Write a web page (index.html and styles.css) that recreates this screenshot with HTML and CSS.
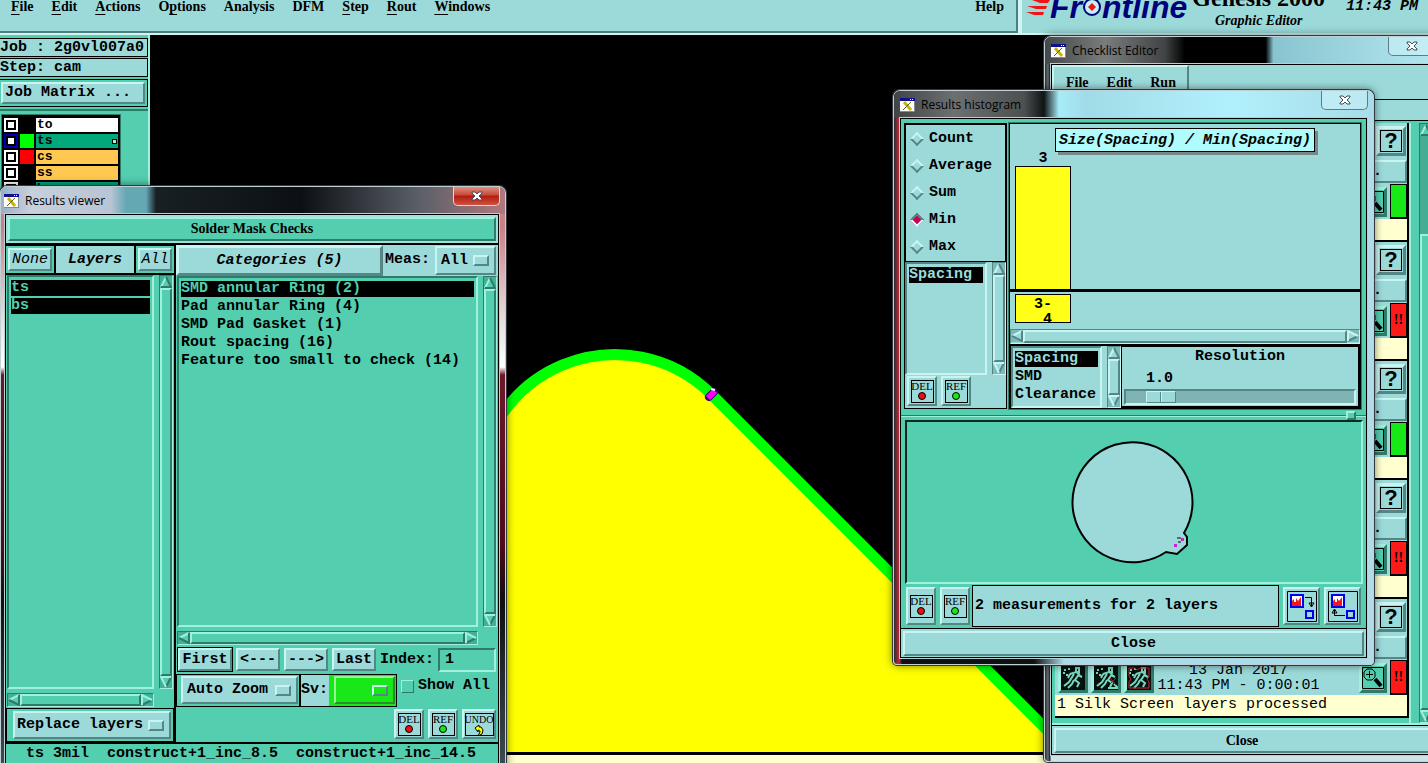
FILE: index.html
```html
<!DOCTYPE html>
<html lang="en">
<head>
    <meta charset="UTF-8">
    <meta name="viewport" content="width=device-width, initial-scale=1.0">
    <title>Graphic Editor</title>
    <link rel="stylesheet" href="styles.css">
</head>
<body>
<svg class="defs" aria-hidden="true">
    <symbol id="up" viewBox="0 0 12 12"><path d="M6 1 L11 11 H1 Z" fill="currentColor"/><path d="M6 1 L1 11" class="lt"/><path d="M6 1 L11 11 H1" class="dk"/></symbol>
    <symbol id="down" viewBox="0 0 12 12"><path d="M1 1 H11 L6 11 Z" fill="currentColor"/><path d="M11 1 L6 11" class="dk"/><path d="M11 1 H1 L6 11" class="lt"/></symbol>
    <symbol id="left" viewBox="0 0 12 12"><path d="M1 6 L11 1 V11 Z" fill="currentColor"/><path d="M1 6 L11 1" class="lt"/><path d="M11 1 V11 L1 6" class="dk"/></symbol>
    <symbol id="right" viewBox="0 0 12 12"><path d="M1 1 L11 6 L1 11 Z" fill="currentColor"/><path d="M11 6 L1 11" class="dk"/><path d="M1 11 V1 L11 6" class="lt"/></symbol>
    <symbol id="xwin" viewBox="0 0 15 14"><path d="M0 0H15V14H0Z" fill="#fff"/><path d="M0 0H15V3H0Z" fill="#10108c"/><path d="M10 1h1v1h-1zM12 1h1v1h-1z" fill="#fff"/><path d="M4 4l7 8" stroke="#c8b400" stroke-width="3"/><path d="M11 4l-8 8" stroke="#5c5c20" stroke-width="1"/><path d="M0 13.5H15M14.5 3V14" stroke="#888"/></symbol>
    <symbol id="cross" viewBox="0 0 12 10"><path d="M1 1h3l2 2 2-2h3v1L8 5l3 3v1H8L6 7 4 9H1V8l3-3-3-3z" fill="#fff" stroke="#444c58"/></symbol>
    <symbol id="zoomer" viewBox="0 0 22 22"><path d="M.5 .5H21.5V21.5H.5Z" class="box"/><path d="M5 2h5l3 3v5l-3 3H5L2 10V5z" class="box"/><path d="M13 12l6 7" stroke="#000" stroke-width="4"/></symbol>
    <symbol id="runner" viewBox="0 0 24 24"><path d="M0 0H24V24H0Z" fill="#06100e"/><path d="M15 2h3v4h-3zM9 8l6-2 3 2-4 6 4 3-2 4M13 8l-5 8-5 4M17 9l4 2M9 8l-2 4M13 14l-2 4-4 4M3 4h2M7 3h2M2 7h2M5 9h2" fill="none" stroke="#78d8be" stroke-width="2"/></symbol>
    <symbol id="hist" viewBox="0 0 14 14"><path d="M1 1H13V13H1Z" fill="#fff" stroke="#00e" stroke-width="2"/><path d="M2 12V7l2-2v3h2V4l2 3 3-4v9z" fill="#f01818"/></symbol>
</svg>

<div class="desktop">
    <svg class="board" aria-hidden="true">
        <path d="M478 753 V491 A136.5 136.5 0 0 1 711.5 394.5 L1070 753 Z" fill="#ff0"/>
        <path d="M478.5 491 A136.5 136.5 0 0 1 711.5 394.5 L1090 773" fill="none" stroke="#0f0" stroke-width="11"/>
        <path d="M709 397 L714 392" stroke="#2a0060" stroke-width="8" stroke-linecap="round"/>
        <path d="M708 398 L715 391" stroke="#f0f" stroke-width="6"/>
        <path d="M711 389l4 1" stroke="#fff" stroke-width="2"/>
        <rect y="752" width="100%" height="3" fill="#000"/>
        <rect y="755" width="100%" height="20" fill="#ffffcf"/>
    </svg>

    <header class="topbar">
        <nav class="menubar">
            <a href="#"><u>F</u>ile</a>
            <a href="#"><u>E</u>dit</a>
            <a href="#"><u>A</u>ctions</a>
            <a href="#">O<u>p</u>tions</a>
            <a href="#">Analysis</a>
            <a href="#">DFM</a>
            <a href="#"><u>S</u>tep</a>
            <a href="#"><u>R</u>out</a>
            <a href="#"><u>W</u>indows</a>
            <a href="#" class="help">Help</a>
        </nav>
        <div class="brand">
            <div class="logo">
                <svg width="24" height="20"><path d="M6 3H24l-2 3H14zM1 9H21l-1 3H10zM0 15H18l-1 3H8z" fill="#f01414"/></svg>
                <span>Fr</span>
                <svg width="20" height="20"><circle cx="10" cy="10" r="8" fill="#c4f2f2" stroke="#00007c" stroke-width="2"/><path d="M10 6l4 4-4 4-4-4z" fill="#f01414"/></svg>
                <span>ntline</span>
            </div>
            <div class="product">
                <strong>Genesis 2000</strong>
                <em>Graphic Editor</em>
            </div>
            <time class="clock">11:43 PM</time>
        </div>
    </header>

    <aside class="side">
        <div class="info">Job : 2g0vl007a0</div>
        <div class="info">Step: cam</div>
        <div class="matrix"><button class="btn">Job Matrix ...</button></div>
        <div class="layer-wrap">
            <div class="layers">
                <label><input type="checkbox"><i></i><span>to</span></label>
                <label class="ts"><input type="checkbox" checked><i></i><span>ts<b></b></span></label>
                <label class="cs"><input type="checkbox"><i></i><span>cs</span></label>
                <label class="ss"><input type="checkbox"><i></i><span>ss</span></label>
                <label class="bs"><input type="checkbox"><i></i><span>bs</span></label>
            </div>
        </div>
    </aside>

    <section class="window checklist">
        <div class="titlebar">
            <svg width="15" height="14"><use href="#xwin"/></svg>
            <h2>Checklist Editor</h2>
            <button class="x" aria-label="Close window"><svg width="12" height="10"><use href="#cross"/></svg></button>
        </div>
        <div class="pane">
            <nav class="cl-menu">
                <a href="#">File</a>
                <a href="#">Edit</a>
                <a href="#">Run</a>
            </nav>
            <div class="cl-title"></div>
            <div class="cl-body">
                <div class="cl-list">
                    <div class="check">
                        <button class="btn help-btn"><b>?</b></button>
                        <button class="btn name-btn">.</button>
                        <div class="run"><button class="btn teal" aria-label="View"><svg width="22" height="22"><use href="#zoomer"/></svg></button><span class="state ok"></span></div>
                        <div class="note"></div>
                    </div>
                    <div class="check">
                        <button class="btn help-btn"><b>?</b></button>
                        <button class="btn name-btn">.</button>
                        <div class="run"><button class="btn teal" aria-label="View"><svg width="22" height="22"><use href="#zoomer"/></svg></button><span class="state bad">!!</span></div>
                        <div class="note"></div>
                    </div>
                    <div class="check">
                        <button class="btn help-btn"><b>?</b></button>
                        <button class="btn name-btn">.</button>
                        <div class="run"><button class="btn teal" aria-label="View"><svg width="22" height="22"><use href="#zoomer"/></svg></button><span class="state ok"></span></div>
                        <div class="note"></div>
                    </div>
                    <div class="check">
                        <button class="btn help-btn"><b>?</b></button>
                        <button class="btn name-btn">.</button>
                        <div class="run"><button class="btn teal" aria-label="View"><svg width="22" height="22"><use href="#zoomer"/></svg></button><span class="state bad">!!</span></div>
                        <div class="note"></div>
                    </div>
                    <div class="check">
                        <button class="btn help-btn"><b>?</b></button>
                        <button class="btn name-btn">.</button>
                        <div class="run">
                            <button class="btn teal" aria-label="Run"><svg width="24" height="24"><use href="#runner"/></svg></button>
                            <button class="btn teal" aria-label="Run on feature"><svg width="24" height="24"><use href="#runner"/><path d="M14 22H24L20 18" fill="none" stroke="#78d8be" stroke-width="2"/><path d="M16 12l6 7M22 12l-6 6" stroke="#b01c2c"/></svg></button>
                            <button class="btn teal" aria-label="Run in profile"><svg width="24" height="24"><use href="#runner"/><path d="M2 2h6l2 2 3-2h9v9l-2 2 2 3v6H2v-6l2-3-2-3z" fill="none" stroke="#d8202c"/></svg></button>
                            <p>13 Jan 2017<br>11:43 PM - 0:00:01</p>
                            <button class="btn teal" aria-label="View"><svg width="22" height="22"><use href="#zoomer"/><path d="M4 7.500h7M7.500 4v7" stroke="#000"/></svg></button>
                            <span class="state bad">!!</span>
                        </div>
                        <div class="note">1 Silk Screen layers processed</div>
                    </div>
                </div>
                <div class="vscroll">
                    <button aria-label="Up"><svg width="12" height="12"><use href="#up"/></svg></button>
                    <div class="track"><div class="thumb"></div></div>
                    <button aria-label="Down"><svg width="12" height="12"><use href="#down"/></svg></button>
                </div>
            </div>
            <div class="close-row"><button class="btn serif">Close</button></div>
        </div>
    </section>

    <section class="window viewer">
        <div class="titlebar">
            <svg width="15" height="14"><use href="#xwin"/></svg>
            <h2>Results viewer</h2>
            <button class="x red" aria-label="Close window"><svg width="12" height="10"><use href="#cross"/></svg></button>
        </div>
        <div class="pane">
            <div class="rv-head"><button class="btn serif green">Solder Mask Checks</button></div>
            <div class="rv-cols">
                <div class="rv-layers">
                    <div class="tabs">
                        <div><button class="btn">None</button></div>
                        <strong>Layers</strong>
                        <div><button class="btn">All</button></div>
                    </div>
                    <div class="scroller">
                        <ul class="list">
                            <li class="on">ts</li>
                            <li class="on">bs</li>
                        </ul>
                        <div class="vscroll">
                            <button aria-label="Up"><svg width="12" height="12"><use href="#up"/></svg></button>
                            <div class="track"><div class="thumb"></div></div>
                            <button aria-label="Down"><svg width="12" height="12"><use href="#down"/></svg></button>
                        </div>
                        <div class="hscroll">
                            <button aria-label="Left"><svg width="12" height="12"><use href="#left"/></svg></button>
                            <div class="track"><div class="thumb"></div></div>
                            <button aria-label="Right"><svg width="12" height="12"><use href="#right"/></svg></button>
                        </div>
                    </div>
                    <div class="replace">
                        <div class="drop"><select aria-label="Layer mode"><option>Replace layers</option></select></div>
                    </div>
                </div>
                <div class="rv-cats">
                    <div class="cat-head">
                        <button class="btn">Categories (5)</button>
                        <label for="meas">Meas:</label>
                        <div class="drop"><select id="meas"><option>All</option></select></div>
                    </div>
                    <div class="scroller">
                        <ul class="list">
                            <li class="on">SMD annular Ring (2)</li>
                            <li>Pad annular Ring (4)</li>
                            <li>SMD Pad Gasket (1)</li>
                            <li>Rout spacing (16)</li>
                            <li>Feature too small to check (14)</li>
                        </ul>
                        <div class="vscroll">
                            <button aria-label="Up"><svg width="12" height="12"><use href="#up"/></svg></button>
                            <div class="track"><div class="thumb"></div></div>
                            <button aria-label="Down"><svg width="12" height="12"><use href="#down"/></svg></button>
                        </div>
                        <div class="hscroll">
                            <button aria-label="Left"><svg width="12" height="12"><use href="#left"/></svg></button>
                            <div class="track"><div class="thumb"></div></div>
                            <button aria-label="Right"><svg width="12" height="12"><use href="#right"/></svg></button>
                        </div>
                    </div>
                    <div class="nav-row">
                        <button class="btn first">First</button>
                        <button class="btn">&lt;---</button>
                        <button class="btn">---&gt;</button>
                        <button class="btn">Last</button>
                        <label for="index">Index:</label>
                        <input id="index" type="text" value="1">
                    </div>
                    <div class="opt-row">
                        <div class="framed"><div class="drop"><select aria-label="Zoom"><option>Auto Zoom</option></select></div></div>
                        <div class="framed sv"><label for="sv">Sv:</label><span><div class="drop"><select id="sv"><option></option></select></div></span></div>
                        <label class="show-all"><input type="checkbox">Show All</label>
                    </div>
                    <div class="tool-row">
                        <button class="btn tool"><span>DEL<i></i></span></button>
                        <button class="btn tool ref"><span>REF<i></i></span></button>
                        <button class="btn tool undo"><span>UNDO<svg width="10" height="11"><path d="M1 3l4-3v2h2l2 3-1 4-4 2 2-4V6L4 5v2z" fill="#ff0" stroke="#000"/></svg></span></button>
                    </div>
                </div>
            </div>
            <div class="status"><span>ts 3mil</span><span>construct+1_inc_8.5</span><span>construct+1_inc_14.5</span></div>
        </div>
    </section>

    <section class="window histogram">
        <div class="titlebar">
            <svg width="15" height="14"><use href="#xwin"/></svg>
            <h2>Results histogram</h2>
            <button class="x" aria-label="Close window"><svg width="12" height="10"><use href="#cross"/></svg></button>
        </div>
        <div class="pane">
            <div class="h-top">
                <div class="h-left">
                    <div class="radios">
                        <label><input type="radio" name="fn">Count</label>
                        <label><input type="radio" name="fn">Average</label>
                        <label><input type="radio" name="fn">Sum</label>
                        <label><input type="radio" name="fn" checked>Min</label>
                        <label><input type="radio" name="fn">Max</label>
                    </div>
                    <div class="scroller cyan">
                        <ul class="list">
                            <li class="on">Spacing</li>
                        </ul>
                        <div class="vscroll">
                            <button aria-label="Up"><svg width="12" height="12"><use href="#up"/></svg></button>
                            <div class="track"><div class="thumb"></div></div>
                            <button aria-label="Down"><svg width="12" height="12"><use href="#down"/></svg></button>
                        </div>
                    </div>
                    <div class="h-tools">
                        <button class="btn tool"><span>DEL<i></i></span></button>
                        <button class="btn tool ref"><span>REF<i></i></span></button>
                    </div>
                </div>
                <div class="h-right">
                    <div class="chart">
                        <h3>Size(Spacing) / Min(Spacing)</h3>
                        <div class="col"><span>3</span><div class="bar"></div></div>
                    </div>
                    <div class="axis"><div class="tick">3-<br>&nbsp;4</div></div>
                    <div class="hscroll cyan">
                        <button aria-label="Left"><svg width="12" height="12"><use href="#left"/></svg></button>
                        <div class="track"><div class="thumb"></div></div>
                        <button aria-label="Right"><svg width="12" height="12"><use href="#right"/></svg></button>
                    </div>
                    <div class="h-res">
                        <div class="scroller cyan">
                            <ul class="list">
                                <li class="on">Spacing</li>
                                <li>SMD</li>
                                <li>Clearance</li>
                            </ul>
                            <div class="vscroll">
                                <button aria-label="Up"><svg width="12" height="12"><use href="#up"/></svg></button>
                                <div class="track"><div class="thumb"></div></div>
                                <button aria-label="Down"><svg width="12" height="12"><use href="#down"/></svg></button>
                            </div>
                        </div>
                        <div class="resolution">
                            <label for="res">Resolution</label>
                            <output for="res">1.0</output>
                            <input id="res" type="range" min="0" max="10" value="1" step="0.1">
                        </div>
                    </div>
                </div>
            </div>
            <div class="sash"><i></i></div>
            <div class="shape">
                <svg width="130" height="130" viewBox="1068 438 130 130">
                    <path d="M1183 534 A60 60 0 1 0 1165 553 L1176 555 L1186 546 V538 Z" fill="#9cdada" stroke="#000" stroke-width="2"/>
                    <path d="M1176 539h4M1177 543h3" stroke="#000"/>
                    <path d="M1180 539h3v3h-3zM1173 545h3v3h-3z" fill="#c820d8"/>
                </svg>
            </div>
            <div class="h-bottom">
                <button class="btn tool"><span>DEL<i></i></span></button>
                <button class="btn tool ref"><span>REF<i></i></span></button>
                <p>2 measurements for 2 layers</p>
                <button class="btn swap" aria-label="Copy histogram down"><svg width="30" height="31"><path d="M.5 .5H29.500V30.500H.5Z" class="box"/><use href="#hist" x="3" y="3" width="14" height="14"/><path d="M19 20h7v7h-7z" fill="none" stroke="#00e" stroke-width="2"/><path d="M18 6.500h6.500V15M22 12l2.500 4 2.500-4z" fill="none" stroke="#000"/></svg></button>
                <button class="btn swap" aria-label="Copy histogram up"><svg width="30" height="31"><path d="M.5 .5H29.500V30.500H.5Z" class="box"/><use href="#hist" x="3" y="3" width="14" height="14"/><path d="M19 20h7v7h-7z" fill="none" stroke="#00e" stroke-width="2"/><path d="M17 24.500H6.500V19M4 22l2.500-4 2.500 4z" fill="none" stroke="#000"/></svg></button>
            </div>
            <div class="close-row"><button class="btn">Close</button></div>
        </div>
    </section>
</div>
</body>
</html>
```
FILE: styles.css
```css
* {
  box-sizing: border-box;
}

body {
  margin: 0;
  background-color: black;
  color: black;
  font: bold 15px/18px "Liberation Mono", monospace;
  --face: #9cdada;
  --lt: #c8f4f2;
  --dk: #558686;
}

button, input, select {
  font: inherit;
  color: inherit;
  margin: 0;
}

svg {
  display: block;
  flex: none;
}

.defs {
  position: absolute;
  width: 0;
  height: 0;
}

.lt { fill: none; stroke: var(--lt); stroke-width: 2; }
.dk { fill: none; stroke: var(--dk); stroke-width: 2; }
.box { fill: none; stroke: black; }

.desktop {
  position: relative;
  height: 100vh;
  overflow: hidden;
}

.board {
  position: absolute;
  left: 0;
  top: 0;
  width: 100%;
  height: 100%;
}

/* Shared controls */
.btn {
  background-color: var(--face);
  border: 2px solid;
  border-color: var(--lt) var(--dk) var(--dk) var(--lt);
  border-radius: 0;
  padding: 0;
  white-space: nowrap;
}

.serif {
  font: bold 14px/18px "Liberation Serif", serif;
}

.green, .teal, .scroller, .vscroll, .hscroll, .rv-cats, .rv-layers, .status, .side {
  --face: #53ceaf;
  --lt: #9ff0dc;
  --dk: #2f7a68;
}

.cyan, .cyan .vscroll {
  --face: #9cdada;
  --lt: #c8f4f2;
  --dk: #558686;
}

.drop {
  display: flex;
  align-items: center;
  background-color: #9cdada;
  border: 2px solid;
  border-color: #c8f4f2 #558686 #558686 #c8f4f2;
  padding-right: 5px;
}

.drop::after {
  content: "";
  width: 12px;
  height: 7px;
  border: 2px solid;
  border-color: #c8f4f2 #558686 #558686 #c8f4f2;
}

.drop select {
  appearance: none;
  border: 0;
  background: none;
  flex: 1;
  min-width: 0;
  padding: 0 4px;
}

.scroller {
  display: grid;
  grid-template-columns: 1fr 14px;
  grid-template-rows: 1fr;
  gap: 4px 5px;
  background-color: var(--face);
}

.list {
  margin: 0;
  padding: 2px;
  list-style: none;
  border: 2px solid;
  border-color: var(--dk) var(--lt) var(--lt) var(--dk);
  white-space: nowrap;
}

.list li {
  border: 1px solid var(--face);
  border-width: 1px 0;
  line-height: 16px;
}

.list .on {
  background-color: black;
  color: var(--face);
}

.vscroll, .hscroll {
  display: flex;
  background-color: var(--face);
  border: 1px solid;
  border-color: var(--dk) var(--lt) var(--lt) var(--dk);
  color: var(--face);
}

.vscroll {
  flex-direction: column;
}

.vscroll button, .hscroll button {
  width: 12px;
  height: 12px;
  flex: none;
  border: 0;
  padding: 0;
  background-color: rgba(0, 60, 60, 0.2);
}

.track {
  flex: 1;
  display: flex;
}

.thumb {
  flex: 1;
  border: 2px solid;
  border-color: var(--lt) var(--dk) var(--dk) var(--lt);
}

.tool {
  width: 30px;
  height: 30px;
  display: flex;
  align-items: center;
  justify-content: center;
}

.tool span {
  display: flex;
  flex-direction: column;
  align-items: center;
  width: 23px;
  height: 23px;
  border: 1px solid black;
  font: 11px/11px "Liberation Serif", serif;
}

.tool i {
  width: 8px;
  height: 8px;
  border: 1px solid black;
  border-radius: 50%;
  background-color: #e81010;
}

.ref i {
  background-color: #18e818;
}

.undo {
  width: 34px;
}

.undo span {
  width: 29px;
  font-size: 10px;
}

/* Top bar */
.topbar {
  position: relative;
  display: flex;
  gap: 4px;
  height: 55px;
  margin-top: -20px;
  background-color: #d4f4f4;
  padding-bottom: 2px;
}

.menubar {
  flex: 1;
  display: flex;
  gap: 18px;
  padding: 18px 12px 0 11px;
  background-color: #9cdada;
  border: 2px solid #4c8080;
  border-width: 0 2px 2px 0;
  font: bold 14px/18px "Liberation Serif", serif;
}

.menubar a, .cl-menu a {
  color: black;
  text-decoration: none;
}

.menubar u {
  text-decoration-thickness: 1px;
  text-underline-offset: 3px;
}

.menubar .help {
  margin-left: auto;
}

.brand {
  flex: 0 0 406px;
  display: flex;
  gap: 5px;
  padding: 0 10px 0 4px;
  background-color: #9cdada;
}

.logo {
  display: flex;
  align-items: center;
  height: 53px;
  color: #00007c;
  font: italic bold 32px/34px "Liberation Sans", sans-serif;
}

.product {
  display: flex;
  flex-direction: column;
  align-items: center;
  padding-top: 4px;
  font-family: "Liberation Serif", serif;
}

.product strong {
  font-size: 24px;
  line-height: 28px;
}

.product em {
  font-size: 14px;
}

.clock {
  margin-left: auto;
  font-style: italic;
  padding-top: 18px;
}

/* Left panel */
.side {
  position: relative;
  width: 150px;
  height: 160px;
  padding: 3px 0 0;
  background-color: #53ceaf;
  border-right: 2px solid #9ff0dc;
}

.info {
  height: 19px;
  line-height: 17px;
  white-space: nowrap;
  background-color: #9cdada;
  border: 1px solid black;
  border-left: 0;
  margin-bottom: 1px;
}

.matrix {
  margin-top: 2px;
  padding: 2px 2px 2px 1px;
  border: 1px solid black;
  border-left: 0;
}

.matrix .btn {
  --face: #9cdada;
  --lt: #c8f4f2;
  --dk: #558686;
  display: block;
  width: 100%;
  text-align: left;
  padding-left: 2px;
}

.layer-wrap {
  margin-top: 2px;
  padding: 3px 0 0 1px;
  border-top: 2px solid #2f7a68;
}

.layers {
  width: 120px;
  background-color: black;
  border: 1px solid #2f7a68;
  padding: 3px 2px 0 2px;
}

.layers label {
  display: flex;
  gap: 2px;
  height: 16px;
}

.layers input {
  appearance: none;
  width: 14px;
  height: 14px;
  border: 2px solid white;
  background: white;
  box-shadow: inset 0 0 0 2px black;
}

.layers .ts input {
  border-color: #0000b0;
}

.layers i {
  width: 14px;
  height: 14px;
}

.layers span {
  flex: 1;
  display: flex;
  justify-content: space-between;
  align-items: center;
  height: 14px;
  padding: 0 1px;
  background-color: white;
  line-height: 14px;
  font-size: 13px;
}

.layers span b {
  width: 5px;
  height: 5px;
  border: 1px solid black;
  background-color: #9ff0dc;
}

.layers .ts i { background-color: #0f0; }
.layers .cs i { background-color: red; }
.layers .ts span, .layers .bs span { background-color: #00a87c; }
.layers .cs span, .layers .ss span { background-color: #ffc850; }

/* Windows */
.window {
  position: absolute;
  display: flex;
  flex-direction: column;
  border: 1px solid #c0d0d4;
  border-radius: 7px 7px 4px 4px;
  padding: 0 6px 6px;
  box-shadow: 0 0 0 1px #303840, 0 0 10px rgba(0, 0, 0, 0.6);
}

.titlebar {
  display: flex;
  align-items: center;
  gap: 6px;
  height: 27px;
  flex: none;
  font-family: "Open Sans", sans-serif;
}

.titlebar h2 {
  flex: 1;
  margin: 0;
  font-size: 12px;
  font-weight: normal;
}

.x {
  align-self: flex-start;
  display: flex;
  align-items: center;
  justify-content: center;
  width: 47px;
  height: 19px;
  padding: 0;
  border: 1px solid #5c7c88;
  border-top: 0;
  border-radius: 0 0 5px 5px;
  background-color: rgba(220, 250, 255, 0.4);
}

.red {
  border-color: #f0d0d0;
  background: linear-gradient(#e09080, #c84838 45%, #b01c10 50%, #d05040);
}

.pane {
  flex: 1;
  display: flex;
  flex-direction: column;
  min-height: 0;
  border: 1px solid black;
  outline: 1px solid #b8d0d0;
  background-color: #53ceaf;
}

.close-row {
  padding: 2px 2px 1px;
  background-color: #9cdada;
  border-top: 1px solid black;
}

.close-row .btn {
  display: block;
  width: 100%;
  height: 25px;
}

/* Checklist editor */
.checklist {
  left: 1044px;
  top: 36px;
  width: 396px;
  height: 726px;
  background: linear-gradient(90deg, #2c3034, #686c70 3px, #181c20 5px, transparent 6px), linear-gradient(#70868a 0, #8ec4d0 60px, #9cd0da 620px, #9cd0da 660px, #d0e4e8);
}

.checklist .titlebar {
  margin: 0 -6px;
  padding: 0 4px 0 6px;
  border-radius: 6px 6px 0 0;
  background: linear-gradient(90deg, #44484a, #787c7c 60px, #404444 120px, #000 140px, #000 56%, #88c4d0 58%, #b4e8f0);
}

.cl-menu {
  display: flex;
  gap: 18px;
  width: 137px;
  height: 34px;
  padding: 6px 12px;
  background-color: #9cdada;
  border: 2px solid;
  border-color: #c8f4f2 #558686 #558686 #c8f4f2;
  font: bold 14px/20px "Liberation Serif", serif;
}

.checklist .pane {
  background-color: #9cdada;
}

.cl-title {
  height: 22px;
  border: 1px solid black;
  border-width: 1px 0;
}

.cl-body {
  flex: 1;
  display: flex;
  gap: 8px;
  background-color: #53ceaf;
  padding: 2px 0 0 3px;
  min-height: 0;
  border-bottom: 2px solid #9ff0dc;
}

.cl-list {
  width: 356px;
  border-right: 2px solid #9ff0dc;
}

.check {
  width: 354px;
  height: 119px;
  display: flex;
  flex-direction: column;
  align-items: flex-end;
  background-color: #9cdada;
  border-right: 2px solid black;
  border-bottom: 2px solid black;
}

.check .btn {
  border-width: 3px;
}

.help-btn {
  width: 30px;
  height: 30px;
  margin: 3px 1px 4px 0;
  display: flex;
  align-items: center;
  justify-content: center;
}

.help-btn b {
  width: 22px;
  height: 22px;
  border: 1px solid black;
  font: bold 22px/20px "Liberation Sans", sans-serif;
}

.check .name-btn {
  width: 100%;
  height: 23px;
  border-width: 2px;
  margin-bottom: 1px;
  text-align: right;
  padding-right: 23px;
  line-height: 14px;
}

.run {
  width: 100%;
  height: 35px;
  display: flex;
  align-items: center;
  justify-content: flex-end;
  gap: 3px;
  padding-left: 3px;
}

.run .btn {
  height: 30px;
  background-color: #53ceaf;
}

.run p {
  flex: 1;
  margin: 0;
  padding-right: 36px;
  text-align: center;
  font-weight: normal;
  line-height: 15px;
}

.state {
  width: 17px;
  height: 35px;
  border: 1px solid black;
  border-bottom-width: 2px;
  text-align: center;
  font: bold 14px/32px "Liberation Serif", serif;
}

.ok { background-color: #18e818; }
.bad { background-color: #ff1a1a; }

.note {
  width: 100%;
  height: 21px;
  padding-left: 2px;
  background-color: #ffffcf;
  font-weight: normal;
  line-height: 20px;
}

.cl-body .track {
  background-color: #44ae94;
  padding-top: 98px;
}

.cl-body .thumb {
  background-color: #53ceaf;
}

/* Results viewer */
.viewer {
  left: 0;
  top: 186px;
  bottom: -17px;
  width: 506px;
  padding: 0 6px 6px 4px;
  background: linear-gradient(#d08890 0, #c88088 40px, #e4dcdc 130px, #fff 180px, #6c1828 188px, #500c18 60%, #101010 70%, #405058);
}

.viewer .titlebar {
  margin: 0 -6px 0 -4px;
  padding: 0 5px 0 3px;
  border-radius: 6px 6px 0 0;
  background: linear-gradient(90deg, #98b0c8, #c8d0dc 30px, #b8c4d4 110px, #64a8b4 125px, #64a8b4 145px, #182024 155px, #0c1014 300px, #5c6068 420px, #b07880);
}

.viewer .pane {
  background-color: black;
  gap: 2px;
}

.rv-head {
  padding: 2px;
  background-color: #9fe0dc;
}

.rv-head .btn {
  display: block;
  width: 100%;
  height: 24px;
}

.rv-cols {
  flex: 1;
  display: grid;
  grid-template-columns: 168px 1fr;
  gap: 2px;
  min-height: 0;
}

.rv-layers, .rv-cats {
  display: flex;
  flex-direction: column;
  background-color: #53ceaf;
  min-height: 0;
  min-width: 0;
}

.tabs .btn, .cat-head .btn, .nav-row .btn, .tool-row .btn {
  --face: #9cdada;
  --lt: #c8f4f2;
  --dk: #558686;
}

.tabs {
  display: grid;
  grid-template-columns: 48px 1fr 38px;
  gap: 2px;
  height: 30px;
  background-color: black;
  padding: 1px 0 2px;
  font-style: italic;
}

.tabs div {
  padding: 2px;
  background-color: #53ceaf;
}

.tabs .btn {
  width: 100%;
  height: 23px;
  font-weight: normal;
}

.tabs strong {
  text-align: center;
  line-height: 27px;
  background-color: #9cdada;
}

.rv-layers .scroller, .rv-cats .scroller {
  flex: 1;
  grid-template-rows: 1fr 14px;
  padding: 0 1px;
}

.replace {
  padding: 2px 2px 2px 6px;
  margin-top: 1px;
  border: 1px solid black;
}

.replace .drop, .opt-row .drop {
  height: 28px;
}

.replace select {
  padding: 0 2px;
}

.cat-head {
  display: flex;
  background-color: #9cdada;
  height: 31px;
}

.cat-head .btn {
  flex: 1;
  border-width: 3px;
  font-style: italic;
}

.cat-head label {
  line-height: 30px;
  margin: 0 3px 0 2px;
}

.cat-head .drop {
  width: 61px;
  margin: 1px 2px;
}

.nav-row {
  display: flex;
  align-items: center;
  gap: 4px;
  padding: 2px;
  height: 29px;
}

.nav-row .btn {
  width: 44px;
  height: 23px;
}

.nav-row .first {
  width: 54px;
  outline: 1px solid black;
}

.nav-row input {
  flex: 1;
  min-width: 0;
  height: 24px;
  padding: 0 5px;
  border: 2px solid;
  border-color: #2f7a68 #9ff0dc #9ff0dc #2f7a68;
  border-radius: 0;
  background: none;
}

.opt-row {
  display: flex;
  height: 33px;
}

.framed {
  border: 1px solid black;
  padding: 1px 1px 1px 4px;
}

.framed .drop {
  width: 117px;
}

.sv {
  display: flex;
  padding: 0;
  background-color: #9cdada;
  line-height: 30px;
}

.sv span {
  background-color: #18e818;
  padding: 1px 1px 1px 5px;
  margin-left: 1px;
}

.sv .drop {
  width: 61px;
  background-color: #18e818;
  border-color: #9cf09c #2c8c2c #2c8c2c #9cf09c;
}

.show-all {
  display: flex;
  align-items: center;
  gap: 4px;
  height: 24px;
  padding-left: 4px;
}

.show-all input {
  appearance: none;
  width: 13px;
  height: 13px;
  border: 1px solid;
  border-color: #9ff0dc #2f7a68 #2f7a68 #9ff0dc;
}

.tool-row {
  display: flex;
  justify-content: flex-end;
  gap: 4px;
  padding: 2px 2px 3px;
}

.status {
  display: flex;
  gap: 18px;
  height: 28px;
  padding-left: 20px;
  line-height: 20px;
  background-color: #53ceaf;
}

/* Results histogram */
.histogram {
  left: 893px;
  top: 90px;
  width: 481px;
  height: 575px;
  background: linear-gradient(90deg, #2c2c30, #c02c38 5px, #701820 7px, rgba(0, 0, 0, 0) 8px, rgba(0, 0, 0, 0) 470px, #b4dce8 474px), linear-gradient(90deg, #101010 140px, #a8dcec 170px);
}

.histogram .titlebar {
  margin: 0 -6px;
  padding: 0 5px 0 6px;
  border-radius: 6px 6px 0 0;
  background: linear-gradient(90deg, #404444, #6c7070 60px, #4c5050 130px, #101414 150px, #a8ecf8 165px, #a0dce8 40%, #b0f0fc 70%, #a8dce8);
}

.h-top {
  display: grid;
  grid-template-columns: 103px 1fr;
  gap: 2px;
  padding: 4px 5px 2px 3px;
}

.h-left {
  display: flex;
  flex-direction: column;
  background-color: #9cdada;
  border: 1px solid black;
}

.radios {
  padding: 0 4px 1px;
  border: 1px solid black;
}

.radios label {
  display: flex;
  align-items: center;
  gap: 7px;
  height: 27px;
  padding-left: 2px;
}

.radios input {
  appearance: none;
  width: 10px;
  height: 10px;
  border: 2px solid;
  border-color: #c8f4f2 #558686 #558686 #c8f4f2;
  transform: rotate(45deg);
}

.radios input:checked {
  background-color: #c80050;
  border-color: #558686 #e0ffff #e0ffff #558686;
}

.h-left .scroller {
  flex: 1;
}

.h-tools {
  display: flex;
  gap: 4px;
  padding: 1px 2px 2px;
}

.h-right {
  display: flex;
  flex-direction: column;
  background-color: #9cdada;
  border: 1px solid black;
  outline: 1px solid #2f7a68;
}

.chart {
  display: flex;
  flex-direction: column;
  align-items: center;
  height: 168px;
  padding: 4px 5px 0;
  border-bottom: 3px solid black;
}

.chart h3 {
  margin: 0;
  padding: 2px 3px 0;
  line-height: 20px;
  font-size: 15px;
  font-style: italic;
  background-color: #b0fcfc;
  border: 1px solid black;
  box-shadow: 3px 3px 0 #788888;
}

.col {
  width: 56px;
  flex: 1;
  display: flex;
  flex-direction: column;
  align-self: flex-start;
  text-align: center;
  line-height: 14px;
}

.bar {
  flex: 1;
  background-color: #ffff18;
  border: 1px solid black;
  border-bottom: 0;
}

.axis {
  height: 37px;
  padding: 2px 5px;
}

.tick {
  width: 56px;
  height: 29px;
  background-color: #ffff18;
  border: 1px solid black;
  text-align: center;
  line-height: 15px;
  padding-top: 2px;
}

.h-right > .hscroll {
  height: 15px;
}

.h-res {
  display: grid;
  grid-template-columns: 110px 1fr;
  height: 64px;
  border: 1px solid black;
  border-width: 2px 1px;
}

.resolution {
  display: flex;
  flex-direction: column;
  padding: 1px 2px 2px;
  border: 1px solid black;
  text-align: center;
}

.resolution output {
  text-align: left;
  padding: 4px 0 0 22px;
}

.resolution input {
  appearance: none;
  width: 100%;
  height: 16px;
  margin-top: auto;
  background-color: #80b4b4;
  border: 2px solid;
  border-color: #558686 #c8f4f2 #c8f4f2 #558686;
}

.resolution input::-webkit-slider-thumb {
  appearance: none;
  width: 30px;
  height: 12px;
  border: 1px solid;
  border-color: #c8f4f2 #558686 #558686 #c8f4f2;
  background: linear-gradient(90deg, #9cdada 13px, #558686 13px, #558686 14px, #c8f4f2 14px, #c8f4f2 15px, #9cdada 15px);
}

.sash {
  display: flex;
  align-items: center;
  justify-content: flex-end;
  height: 9px;
  padding-right: 10px;
  background: linear-gradient(#53ceaf 4px, #2f7a68 4px, #2f7a68 5px, #9ff0dc 5px, #9ff0dc 6px, #53ceaf 6px);
}

.sash i {
  width: 10px;
  height: 9px;
  background-color: #53ceaf;
  border: 2px solid;
  border-color: #9ff0dc #2f7a68 #2f7a68 #9ff0dc;
}

.shape {
  flex: 1;
  display: flex;
  align-items: center;
  justify-content: center;
  margin: 0 3px 0 4px;
  border: 2px solid;
  border-color: #102820 #9ff0dc #9ff0dc #102820;
}

.h-bottom {
  display: flex;
  align-items: center;
  gap: 4px;
  height: 44px;
  padding: 0 5px;
}

.h-bottom .tool {
  height: 38px;
}

.h-bottom p {
  flex: 1;
  height: 42px;
  margin: 0 0 0 -2px;
  padding-left: 2px;
  line-height: 40px;
  background-color: #9cdada;
  border: 1px solid black;
}

.swap {
  width: 37px;
  height: 38px;
  display: flex;
  align-items: center;
  justify-content: center;
}
```
